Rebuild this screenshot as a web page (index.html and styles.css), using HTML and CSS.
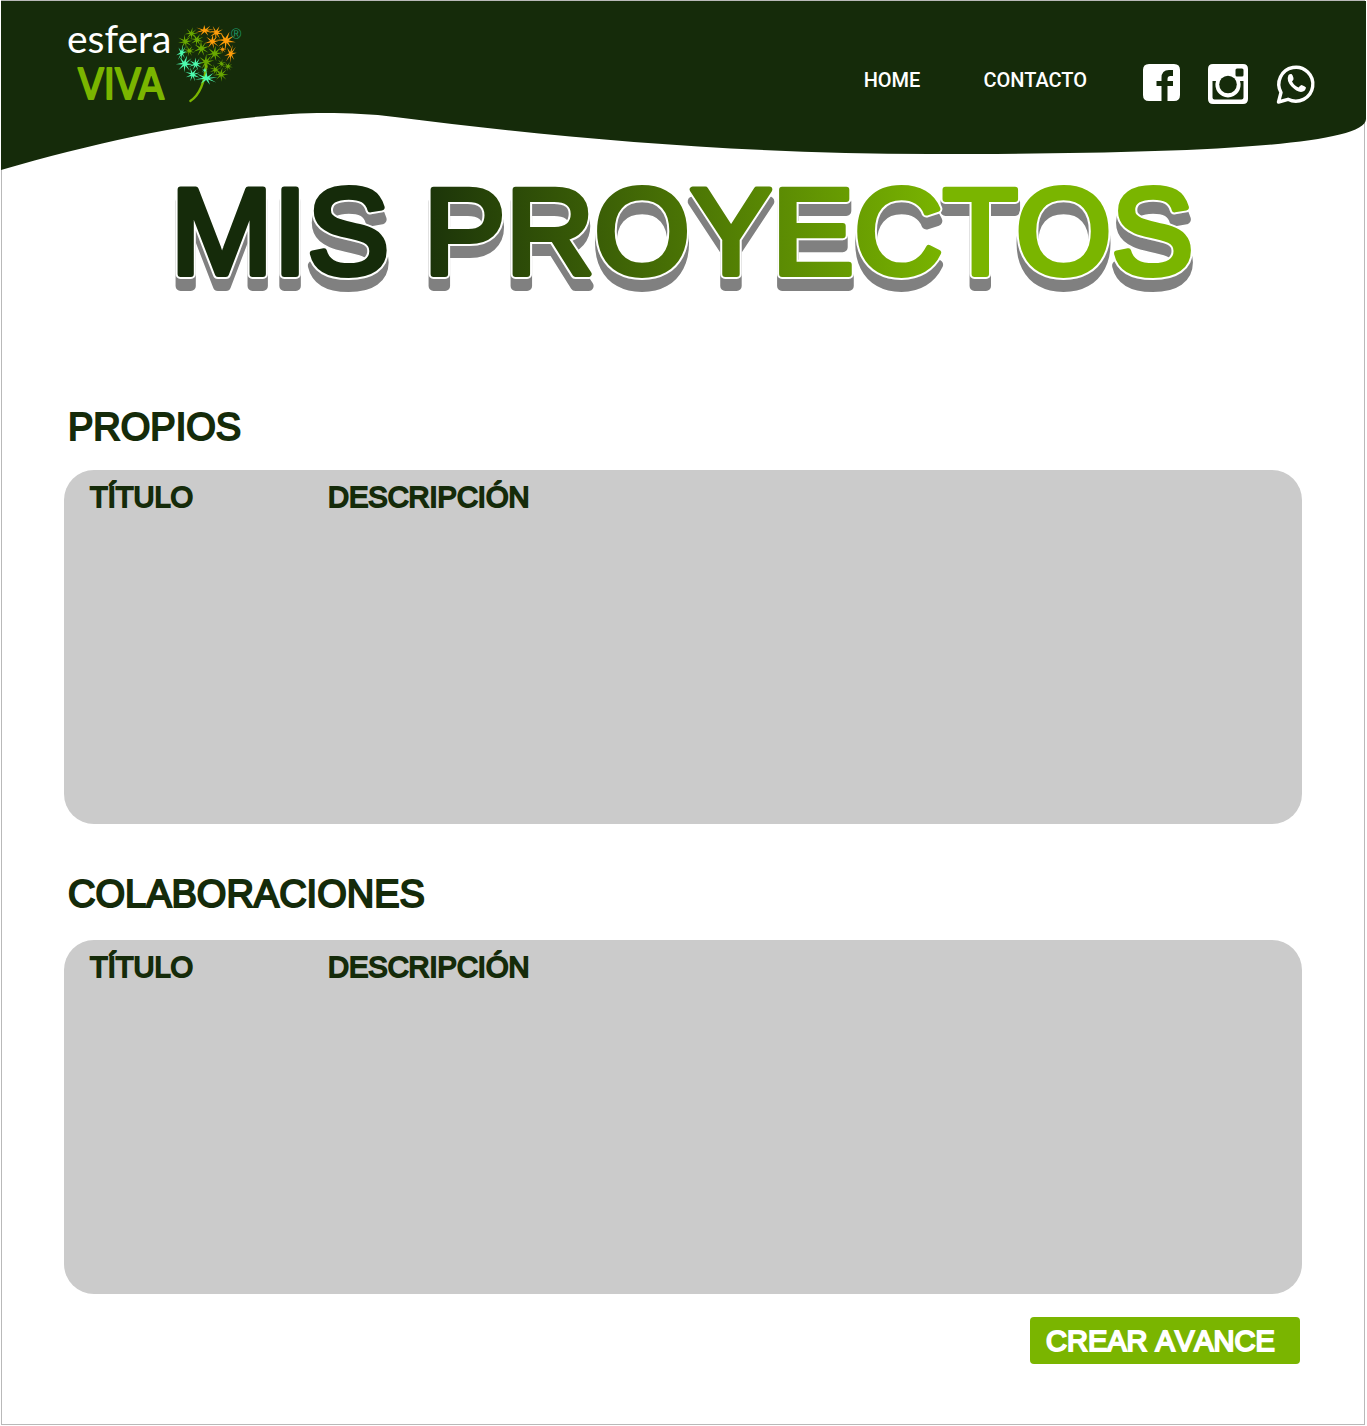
FILE: index.html
```html
<!DOCTYPE html>
<html lang="es">
<head>
<meta charset="utf-8">
<meta name="viewport" content="width=device-width, initial-scale=1">
<title>Esfera Viva – Mis proyectos</title>
<link rel="stylesheet" href="styles.css">
</head>
<body>
<div class="page">
  <header class="header">
    <svg class="header-wave" viewBox="0 0 1365 169" preserveAspectRatio="none" aria-hidden="true">
      <path d="M0 0H1365V118C1365 149 1129 153 929 153C739 153 559 137 394 116C371 113 349 112 324 112C239 112 119 134 0 169Z"/>
    </svg>
    <a class="logo" href="#" aria-label="Esfera Viva">
      <svg width="178" height="84" viewBox="0 0 178 84">
        <defs>
          <path id="burst" d="M-1-23L2-5L14-20L6-3L24-6L7 2L22 13L4 5L9 23L0 7L-11 22L-4 4L-24 10L-7 0L-21-12L-4-4Z"/>
        </defs>
        <text class="logo-esfera" x="0" y="31">esfera</text>
        <text class="logo-viva" x="11" y="77">VIVA</text>
        <g transform="translate(105 -4) scale(.3333)">
          <path class="stem" d="M102 140C100 190 82 232 55 249"/>
          <g class="leaf">
            <use href="#burst" transform="translate(58 46) rotate(15) scale(.8)"/>
            <use href="#burst" transform="translate(40 70) rotate(50) scale(.9)"/>
            <use href="#burst" transform="translate(75 65) rotate(30) scale(.85)"/>
            <use href="#burst" transform="translate(88 91)"/>
            <use href="#burst" transform="translate(52 98) rotate(35) scale(.7)"/>
            <use href="#burst" transform="translate(128 106) rotate(10)"/>
            <use href="#burst" transform="translate(102 131) rotate(5)"/>
            <use href="#burst" transform="translate(149 137) rotate(70) scale(.6)"/>
            <use href="#burst" transform="translate(130 155) rotate(40) scale(.7)"/>
            <use href="#burst" transform="translate(168 145) rotate(25) scale(.6)"/>
            <use href="#burst" transform="translate(147 169) rotate(15) scale(.9)"/>
          </g>
          <g class="sun">
            <use href="#burst" transform="translate(98 37) scale(1.2 .7)"/>
            <use href="#burst" transform="translate(133 43) rotate(30) scale(.9)"/>
            <use href="#burst" transform="translate(121 70) rotate(8) scale(.95)"/>
            <use href="#burst" transform="translate(162 67) rotate(25) scale(1.2)"/>
            <use href="#burst" transform="translate(152 94) rotate(60) scale(.5)"/>
            <use href="#burst" transform="translate(176 107) rotate(15) scale(.7 1.2)"/>
          </g>
          <g class="mint">
            <use href="#burst" transform="translate(29 104) rotate(12) scale(.6 1.1)"/>
            <use href="#burst" transform="translate(38 137) rotate(20) scale(1 1.1)"/>
            <use href="#burst" transform="translate(71 138) scale(.85)"/>
            <use href="#burst" transform="translate(62 169) rotate(40) scale(.9)"/>
            <use href="#burst" transform="translate(98 157) scale(.4)"/>
            <use href="#burst" transform="translate(103 180) rotate(5) scale(1.4 .85)"/>
          </g>
        </g>
        <text class="logo-mark" x="164" y="17">®</text>
      </svg>
    </a>
    <nav class="nav" aria-label="Principal">
      <div class="nav-links">
        <a class="nav-link" href="#">HOME</a>
        <a class="nav-link" href="#">CONTACTO</a>
      </div>
      <div class="social">
        <a href="#" aria-label="Facebook">
          <svg width="37" height="37" viewBox="0 0 37 37"><path fill="#fff" d="M6 0H31Q37 0 37 6V31Q37 37 31 37H24.500V22H30V17H24.500V15Q24.500 12 27.500 12H30V6H26Q18.500 6 18.500 14V17H13.500V22H18.500V37H6Q0 37 0 31V6Q0 0 6 0Z"/></svg>
        </a>
        <a href="#" aria-label="Instagram">
          <svg width="40" height="40" viewBox="0 0 40 40"><path fill="#fff" fill-rule="evenodd" d="M5 0H35Q40 0 40 5V35Q40 40 35 40H5Q0 40 0 35V5Q0 0 5 0ZM29 4.500Q27.500 4.500 27.500 6V11Q27.500 12.500 29 12.500H34Q35.500 12.500 35.500 11V6Q35.500 4.500 34 4.500ZM4.500 17V33.500Q4.500 35.500 6.500 35.500H33.500Q35.500 35.500 35.500 33.500V17H32A12.600 12.600 0 1 1 8 17Z"/><circle class="lens" cx="20" cy="20.500" r="8.800"/></svg>
        </a>
        <a href="#" aria-label="WhatsApp">
          <svg width="40" height="40" viewBox="0 0 40 40"><path fill="none" stroke="#fff" stroke-width="3.400" stroke-linejoin="round" d="M2.500 38L5 28.500A17 17 0 1 1 12 35.300Z"/><path fill="#fff" d="M12.500 11Q14 9.500 15.500 10Q16.500 10.500 17.500 14Q18 15.500 16 17.500Q18.500 22 22.500 23.500Q24.500 21 25.500 21Q29 22 30 23.500Q29.500 27.500 25 28Q20.500 27.500 15.500 22.500Q10 16.500 12.500 11Z"/></svg>
        </a>
      </div>
    </nav>
  </header>

  <h1 class="title">
    <svg viewBox="0 0 1362 140" width="100%">
      <defs>
        <linearGradient id="leaf-fade" gradientUnits="userSpaceOnUse" x1="390" y1="75" x2="945" y2="45">
          <stop offset="0" stop-color="#152b0a"/>
          <stop offset="1" stop-color="#7ab500"/>
        </linearGradient>
      </defs>
      <g class="title-shadow"><use href="#title-text" y="12"/></g>
      <g class="title-outline"><use href="#title-text"/></g>
      <g class="title-face"><text id="title-text" x="680" y="104" text-anchor="middle">MIS PROYECTOS</text></g>
    </svg>
  </h1>

  <main class="main">
    <section class="group">
      <h2 class="group-title" id="own">PROPIOS</h2>
      <div class="panel">
        <table class="projects" aria-labelledby="own">
          <thead><tr><th class="col-title" scope="col">TÍTULO</th><th scope="col">DESCRIPCIÓN</th></tr></thead>
          <tbody></tbody>
        </table>
      </div>
    </section>
    <section class="group">
      <h2 class="group-title" id="shared">COLABORACIONES</h2>
      <div class="panel">
        <table class="projects" aria-labelledby="shared">
          <thead><tr><th class="col-title" scope="col">TÍTULO</th><th scope="col">DESCRIPCIÓN</th></tr></thead>
          <tbody></tbody>
        </table>
      </div>
    </section>
    <div class="actions">
      <button class="button" type="button">CREAR AVANCE</button>
    </div>
  </main>
</div>
</body>
</html>
```
FILE: styles.css
```css
:root {
  --forest: #152b0a;
  --lime: #7ab500;
  --panel: #cbcbcb;
}

* {
  box-sizing: border-box;
}

body {
  margin: 0;
  padding: 0 2px 1px 1px;
  background: #fff;
  color: var(--forest);
  font-family: "Liberation Sans", Arial, sans-serif;
  font-kerning: none;
}

.page {
  min-height: calc(100vh - 1px);
  border: 1px solid #b9b9b9;
}

.header {
  position: relative;
  display: flex;
  justify-content: space-between;
  align-items: flex-start;
  height: 169px;
  margin: 0 -2px 0 -1px;
  padding: 21px 50px 0 66px;
}

.header-wave {
  position: absolute;
  inset: 0;
  width: 100%;
  height: 100%;
  fill: var(--forest);
}

.logo,
.nav {
  position: relative;
}

.logo svg,
.social svg,
.title svg {
  display: block;
  overflow: visible;
}

.logo-esfera {
  fill: #fff;
  font: 400 39px Lato, sans-serif;
}

.logo-viva {
  fill: var(--lime);
  stroke: var(--lime);
  stroke-width: 2px;
  stroke-linejoin: round;
  font: 400 42px "DejaVu Sans Condensed", "Liberation Sans", sans-serif;
}

.logo-mark {
  fill: #1d9a68;
  font: 400 14px "Liberation Sans", sans-serif;
}

.stem {
  fill: none;
  stroke: var(--lime);
  stroke-width: 7px;
  stroke-linecap: round;
}

.leaf {
  fill: #69a800;
}

.sun {
  fill: #ff9d0a;
}

.mint {
  fill: #4dfbb0;
}

.nav {
  display: flex;
  align-items: flex-start;
  gap: 56px;
  padding-top: 42px;
}

.nav-links {
  display: flex;
  gap: 63px;
  padding-top: 4px;
}

.nav-link {
  color: #fff;
  font: 500 20px/24px Roboto, sans-serif;
  text-decoration: none;
}

.social {
  display: flex;
  align-items: flex-start;
  gap: 28px;
}

.lens {
  fill: var(--forest);
}

.title {
  margin: 0;
}

.title svg {
  font: 400 123px "Liberation Sans", Arial, sans-serif;
  stroke-linejoin: round;
}

.title-shadow {
  fill: #808080;
  stroke: #808080;
  stroke-width: 10px;
}

.title-outline {
  fill: #fff;
  stroke: #fff;
  stroke-width: 10px;
}

.title-face {
  fill: url(#leaf-fade);
  stroke: url(#leaf-fade);
  stroke-width: 6px;
}

.main {
  padding: 92px 62px 56px;
}

.group {
  margin-bottom: 45px;
}

.group + .group {
  margin-bottom: 23px;
}

.group-title {
  margin: 0 0 18px;
  padding-left: 4px;
  font-size: 38px;
  font-weight: 400;
  line-height: 50px;
  -webkit-text-stroke: 2px var(--forest);
}

.group + .group .group-title {
  margin-bottom: 21px;
}

.panel {
  min-height: 354px;
  padding: 10px 26px;
  border-radius: 30px;
  background: var(--panel);
}

.projects {
  width: 100%;
  border-collapse: collapse;
  table-layout: fixed;
}

.projects th {
  padding: 0;
  font-size: 29px;
  font-weight: 400;
  line-height: 34px;
  text-align: left;
  -webkit-text-stroke: 2px var(--forest);
}

.projects .col-title {
  width: 238px;
}

.actions {
  display: flex;
  justify-content: flex-end;
  padding-right: 2px;
}

.button {
  min-width: 270px;
  padding: 7px 16px 6px;
  border: 0;
  border-radius: 4px;
  background: var(--lime);
  color: #fff;
  font: 400 29px/34px "Liberation Sans", Arial, sans-serif;
  font-kerning: none;
  text-align: left;
  cursor: pointer;
  -webkit-text-stroke: 2px #fff;
}
```
